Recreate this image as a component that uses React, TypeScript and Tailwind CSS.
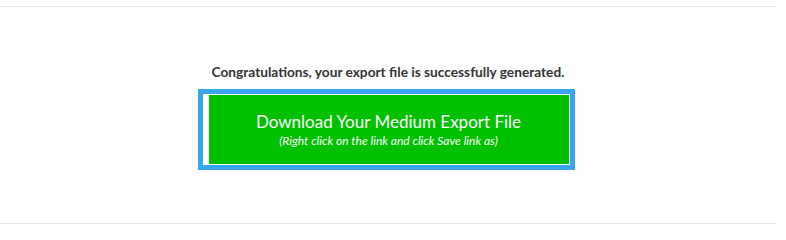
export default function App() {
  return (
    <div className="w-[776px] pt-[6px] bg-white" style={{ fontFamily: 'Lato, "Open Sans", sans-serif' }}>
      <div className="border-t border-[#e5e5e5] h-[218px] border-b flex flex-col items-center">
        <p className="mt-[55px] text-[13.7px] font-bold text-[#333333] leading-[20px]">
          Congratulations, your export file is successfully generated.
        </p>
        <div className="mt-[7px] mr-[4px] border-[5px] border-[#38a5ee] bg-white pl-[6px] pr-px py-px">
          <a href="#" className="flex flex-col items-center justify-center w-[360px] h-[69px] bg-[#00c000] text-white">
            <span className="text-[17px] leading-[22px]">Download Your Medium Export File</span>
            <span className="text-[12px] italic leading-[16px]">(Right click on the link and click Save link as)</span>
          </a>
        </div>
      </div>
    </div>
  );
}
